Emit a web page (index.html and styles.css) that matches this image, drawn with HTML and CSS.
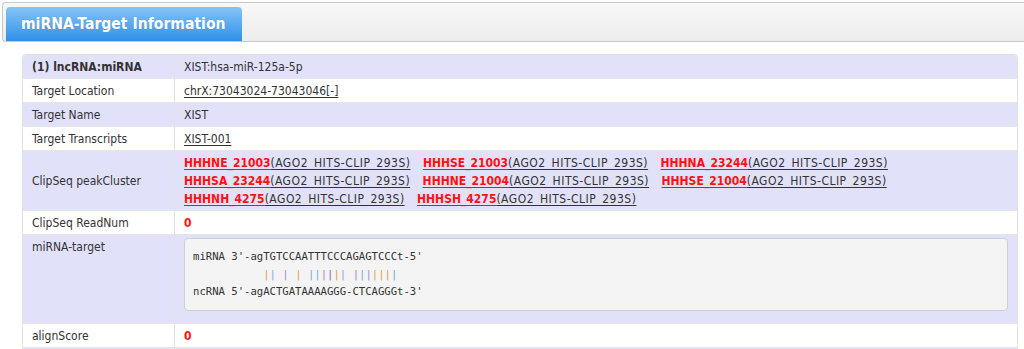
FILE: index.html
```html
<!DOCTYPE html>
<html>
<head>
<meta charset="utf-8">
<title>miRNA-Target Information</title>
<link rel="stylesheet" href="styles.css">
</head>
<body>
<div class="page">
  <div class="tabbar">
    <div class="tab">miRNA-Target Information</div>
  </div>
  <div class="content">
    <table class="info">
      <tr class="alt">
        <th>(1) lncRNA:miRNA</th>
        <td>XIST:hsa-miR-125a-5p</td>
      </tr>
      <tr>
        <td class="label">Target Location</td>
        <td><a class="plain" href="#">chrX:73043024-73043046[-]</a></td>
      </tr>
      <tr class="alt">
        <td class="label">Target Name</td>
        <td>XIST</td>
      </tr>
      <tr>
        <td class="label">Target Transcripts</td>
        <td><a class="plain" href="#">XIST-001</a></td>
      </tr>
      <tr class="alt">
        <td class="label">ClipSeq peakCluster</td>
        <td class="clusters">
          <span class="entry"><a class="red" href="#">HHHNE_21003</a><a class="plain" href="#">(AGO2_HITS-CLIP_293S)</a></span>
          <span class="entry"><a class="red" href="#">HHHSE_21003</a><a class="plain" href="#">(AGO2_HITS-CLIP_293S)</a></span>
          <span class="entry"><a class="red" href="#">HHHNA_23244</a><a class="plain" href="#">(AGO2_HITS-CLIP_293S)</a></span>
          <span class="entry"><a class="red" href="#">HHHSA_23244</a><a class="plain" href="#">(AGO2_HITS-CLIP_293S)</a></span>
          <span class="entry"><a class="red" href="#">HHHNE_21004</a><a class="plain" href="#">(AGO2_HITS-CLIP_293S)</a></span>
          <span class="entry"><a class="red" href="#">HHHSE_21004</a><a class="plain" href="#">(AGO2_HITS-CLIP_293S)</a></span>
          <span class="entry"><a class="red" href="#">HHHNH_4275</a><a class="plain" href="#">(AGO2_HITS-CLIP_293S)</a></span>
          <span class="entry"><a class="red" href="#">HHHSH_4275</a><a class="plain" href="#">(AGO2_HITS-CLIP_293S)</a></span>
        </td>
      </tr>
      <tr>
        <td class="label">ClipSeq ReadNum</td>
        <td><span class="num">0</span></td>
      </tr>
      <tr class="alt">
        <td class="label top">miRNA-target</td>
        <td class="top"><pre class="align">miRNA 3'-agTGTCCAATTTCCCAGAGTCCCt-5'
           <span class="o">|</span><span class="b">|</span> <span class="p">|</span> <span class="o">|</span> <span class="b">||</span><span class="p">|</span><span class="d">|</span><span class="o">|</span><span class="b">|</span> <span class="p">|</span><span class="b">|</span><span class="p">|</span><span class="o">|||</span><span class="b">|</span>
ncRNA 5'-agACTGATAAAAGGG-CTCAGGGt-3'</pre></td>
      </tr>
      <tr>
        <td class="label">alignScore</td>
        <td><span class="num">0</span></td>
      </tr>
      <tr class="alt">
        <td class="label">&nbsp;</td>
        <td>&nbsp;</td>
      </tr>
    </table>
  </div>
</div>
</body>
</html>
```

FILE: styles.css
```css
html, body {
  margin: 0;
  padding: 0;
  background: #ffffff;
}

body {
  font-family: "DejaVu Sans Condensed", "Open Sans", "DejaVu Sans", sans-serif;
  font-size: 12px;
  color: #333333;
}

.page {
  padding: 2px 0 0 2px;
}

.tabbar {
  height: 34px;
  padding: 4px 0 0 3px;
  border: 1px solid #c8c8c8;
  border-right: none;
  border-radius: 4px 0 0 4px;
  background: linear-gradient(#f8f8f8, #ececec);
  display: flex;
  align-items: flex-end;
}

.tab {
  width: 236px;
  height: 34px;
  box-sizing: border-box;
  border-radius: 4px 4px 0 0;
  background: linear-gradient(#86c4f6, #2f90e8);
  color: #ffffff;
  font-family: "DejaVu Sans Condensed", "DejaVu Sans", sans-serif;
  font-weight: bold;
  font-size: 15.6px;
  line-height: 34px;
  padding-left: 15px;
  text-shadow: 0 0 1px rgba(0, 0, 0, 0.15);
}

.content {
  padding: 12px 5px 0 20px;
}

.info {
  width: 996px;
  border-collapse: separate;
  border-spacing: 0;
  border: 1px solid #e2e2e2;
  border-bottom: none;
  border-radius: 4px 4px 0 0;
}

.info th,
.info td {
  text-align: left;
  vertical-align: middle;
  padding: 3px 9px 2px 9px;
  line-height: 18px;
  border-bottom: 1px solid #e6e6e6;
}

.info th,
.info td.label {
  width: 133px;
  border-right: 1px solid #e2e2e2;
}

.info th {
  font-weight: bold;
}

.info tr.alt th,
.info tr.alt td {
  background: #e1e1fa;
}

.info tr:first-child th {
  border-top-left-radius: 3px;
}

.info tr:first-child td {
  border-top-right-radius: 3px;
}

.info td.top {
  vertical-align: top;
}

a.plain {
  color: #333333;
  text-decoration: underline;
  text-underline-offset: 2px;
}

a.red {
  color: #ff1010;
  font-weight: bold;
  text-decoration: underline;
  text-underline-offset: 2px;
}

.clusters a.plain {
  letter-spacing: 0.5px;
}

.entry {
  white-space: nowrap;
  margin-right: 9px;
}

.num {
  color: #ff1010;
  font-weight: bold;
}

.align {
  margin: 0 0 10px 0;
  padding: 9px 8px;
  background: #f4f4f4;
  border: 1px solid #cfcfcf;
  border-radius: 4px;
  font-family: "DejaVu Sans Mono", "Liberation Mono", monospace;
  font-size: 10.6px;
  line-height: 17.5px;
  color: #333333;
}

.align .o { color: #e0a048; }
.align .b { color: #78acdc; }
.align .p { color: #a888c8; }
.align .d { color: #8c5cb0; }
```
